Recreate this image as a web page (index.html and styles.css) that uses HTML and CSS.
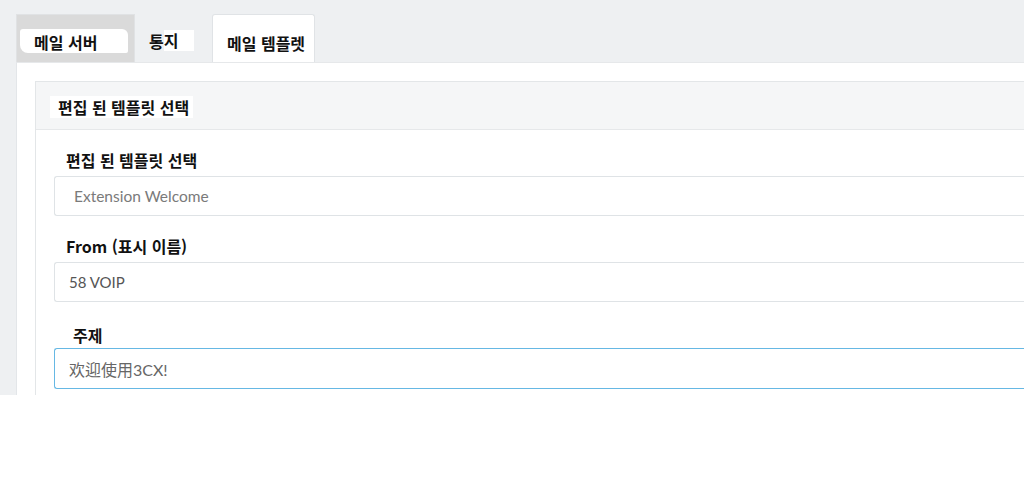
FILE: index.html
```html
<!DOCTYPE html>
<html lang="ko">
<head>
<meta charset="utf-8">
<title>메일 템플렛</title>
<link rel="stylesheet" href="styles.css">
</head>
<body>
<div class="app">
  <div class="tabs">
    <div class="tab tab-server"><span class="mark mark-server">메일 서버</span></div>
    <div class="tab tab-notify"><span class="tab-label">통<span class="mark mark-notify">지</span></span></div>
    <div class="tab tab-active"><span class="tab-label">메일 템플렛</span></div>
  </div>
  <div class="content">
    <div class="panel">
      <div class="panel-head"><span class="mark mark-head">편집 된 템플릿 선택</span></div>
      <div class="panel-body">
        <div class="group">
          <div class="label">편집 된 템플릿 선택</div>
          <div class="input input-select">Extension Welcome</div>
        </div>
        <div class="group group-from">
          <div class="label">From (표시 이름)</div>
          <div class="input input-small">58 VOIP</div>
        </div>
        <div class="group group-subject">
          <div class="label label-shift"><span class="mark mark-subject">주제</span></div>
          <div class="input input-focus">欢迎使用3CX!</div>
        </div>
      </div>
    </div>
  </div>
</div>
</body>
</html>
```

FILE: styles.css
```css
* { box-sizing: border-box; }
html, body { margin: 0; padding: 0; background: #ffffff; }
body {
  font-family: "Noto Sans CJK KR", "Noto Sans", sans-serif;
  color: #111;
}
.app {
  height: 395px;
  background: #eef0f2;
  padding: 14px 0 0 16px;
  display: flex;
  flex-direction: column;
  overflow: hidden;
}
.tabs {
  display: flex;
  height: 48px;
  flex: 0 0 48px;
}
.tab {
  height: 48px;
  font-size: 16px;
  font-weight: 700;
  display: flex;
  align-items: center;
  line-height: 20px;
}
.tab-server {
  width: 119px;
  background: #dadada;
  border: 1px solid #e0e2e4;
  border-bottom: none;
  padding: 0 0 0 3px;
}
.mark { background: #fff; }
.mark-server {
  display: inline-block;
  width: 108px;
  height: 24px;
  padding: 3px 0 0 14px;
  margin-top: 4px;
  border-radius: 3px 6px 2px 8px;
}
.tab-notify {
  width: 77px;
  padding: 0 0 0 14px;
}
.tab-notify .tab-label { display: flex; align-items: center; margin-top: 5px; }
.mark-notify {
  display: inline-block;
  width: 30px;
  height: 21px;
  line-height: 21px;
}
.tab-active {
  width: 103px;
  background: #fff;
  border: 1px solid #e0e3e6;
  border-bottom: none;
  border-radius: 3px 3px 0 0;
  padding: 0 0 0 14px;
}
.tab-active .tab-label { margin-top: 8px; }
.content {
  flex: 1;
  background: #fff;
  border-left: 1px solid #e3e6e9;
  border-top: 1px solid #e6e8ea;
  padding: 18px 0 0 18px;
}
.panel {
  height: 100%;
  border: 1px solid #e3e6e8;
  border-right: none;
  border-bottom: none;
}
.panel-head {
  height: 48px;
  background: #f5f6f7;
  border-bottom: 1px solid #e6e8ea;
  display: flex;
  align-items: center;
  padding-left: 14px;
}
.mark-head {
  display: inline-block;
  font-size: 16px;
  font-weight: 700;
  line-height: 22px;
  padding: 0 4px 0 8px;
  margin-top: 3px;
}
.panel-body {
  padding: 20px 0 0 18px;
}
.group-from { margin-top: 20px; }
.group-subject { margin-top: 23px; }
.label {
  font-size: 16px;
  font-weight: 700;
  line-height: 20px;
  height: 20px;
  padding-left: 12px;
  margin-bottom: 6px;
}
.group-subject .label { margin-bottom: 3px; }
.label-shift { padding-left: 16px; }
.mark-subject {
  display: inline-block;
  padding: 0 3px;
  line-height: 20px;
}
.input {
  height: 40px;
  border: 1px solid #dfe3e6;
  border-right: none;
  border-radius: 3px 0 0 3px;
  display: flex;
  align-items: center;
  font-family: Lato, "Noto Sans CJK SC", sans-serif;
  color: #6f6f6f;
}
.input-select {
  font-size: 15.5px;
  padding-left: 19px;
  color: #7a7a7a;
}
.input-small {
  font-size: 15px;
  padding-left: 14px;
  color: #555;
}
.input-focus {
  height: 41px;
  border-color: #66b8e4;
  font-size: 16px;
  padding-left: 14px;
  color: #666;
}
```
